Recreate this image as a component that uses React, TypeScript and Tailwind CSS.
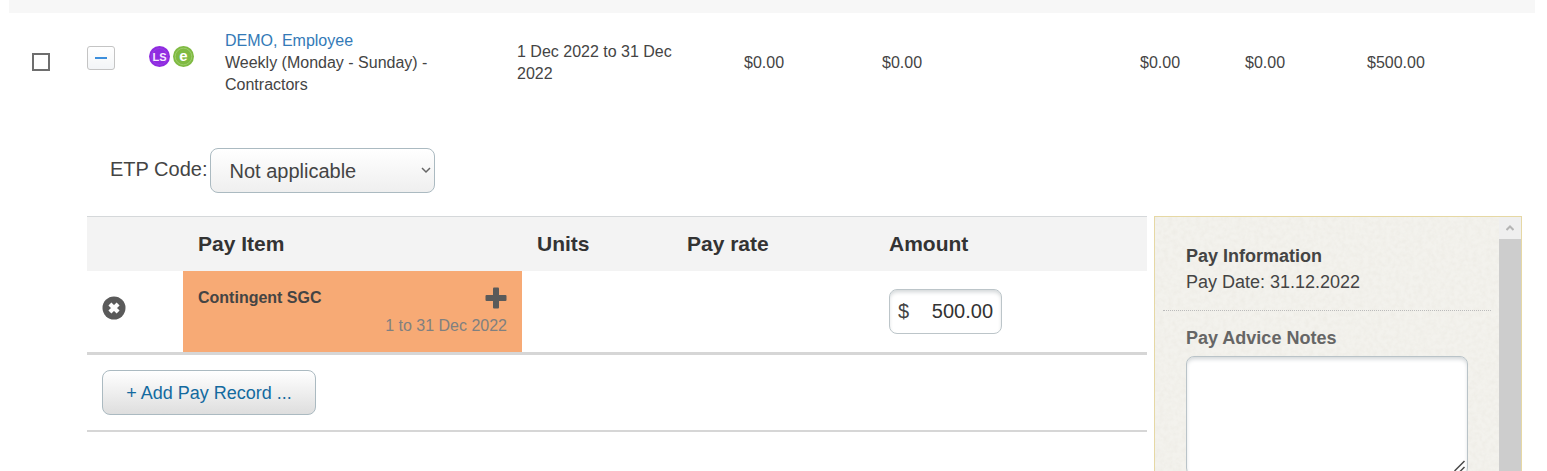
import { useState } from 'react';
import type { ReactNode } from 'react';

type PayRecord = {
  id: number;
  item: string;
  period: string;
  amount: string;
};

const records: PayRecord[] = [
  { id: 1, item: 'Contingent SGC', period: '1 to 31 Dec 2022', amount: '500.00' },
];

const etpCodes = ['Not applicable', 'Code R', 'Code O', 'Code S', 'Code P'];

function SuperBadge() {
  return (
    <svg className="w-5.25 h-5.25" viewBox="0 0 21 21" role="img" aria-label="LS">
      <circle cx="10.5" cy="10.5" r="10.5" fill="#8f2be0" />
      <circle cx="10.5" cy="10.5" r="8" fill="none" stroke="#9a3ee6" strokeWidth="1" />
      <text x="10.5" y="14.5" fill="#f6e9ff" fontSize="11" fontWeight="700" textAnchor="middle">
        LS
      </text>
    </svg>
  );
}

function EmployeeBadge() {
  return (
    <svg className="w-5.25 h-5.25" viewBox="0 0 21 21" role="img" aria-label="e">
      <circle cx="10.5" cy="10.5" r="10.5" fill="#7fba42" />
      <circle cx="10.5" cy="10.5" r="8.3" fill="none" stroke="#a3d075" strokeWidth="0.8" />
      <text x="10.5" y="14.5" fill="#fff" fontSize="15" fontWeight="700" textAnchor="middle">
        e
      </text>
    </svg>
  );
}

function RemoveIcon() {
  return (
    <svg className="w-6 h-6" viewBox="0 0 24 24">
      <circle cx="12" cy="12" r="11.5" fill="#5a5a5a" />
      <path d="M7.9 7.9l8.2 8.2M16.1 7.9l-8.2 8.2" stroke="#fff" strokeWidth="4.2" />
    </svg>
  );
}

function PlusIcon() {
  return (
    <svg className="w-5.5 h-5.5" viewBox="0 0 22 22" fill="#5a5a5a">
      <rect x="8" y="0.5" width="6" height="21" rx="1" />
      <rect x="0.5" y="8" width="21" height="6" rx="1" />
    </svg>
  );
}

function PaperTexture() {
  return (
    <svg className="absolute inset-0 w-full h-full pointer-events-none" aria-hidden="true">
      <filter id="paper">
        <feTurbulence type="fractalNoise" baseFrequency="0.22" numOctaves="2" seed="4" />
        <feColorMatrix values="0 0 0 0 0.8  0 0 0 0 0.78  0 0 0 0 0.72  1.8 0 0 0 -0.6" />
      </filter>
      <rect width="100%" height="100%" filter="url(#paper)" opacity="0.4" />
    </svg>
  );
}

function ScrollTrack() {
  return (
    <div className="flex flex-col w-5.5 shrink-0 relative">
      <div className="h-5.5 bg-[#efefef] flex items-center justify-center">
        <svg className="w-2 h-2" viewBox="0 0 8 8" fill="none" stroke="#b5b5b5" strokeWidth="2">
          <path d="M0.5 6L4 2.5L7.5 6" />
        </svg>
      </div>
      <div className="flex-1 bg-[#cdcdcd]" />
    </div>
  );
}

function HeadCell({ children }: { children?: ReactNode }) {
  return <th className="px-[15px] text-left text-[21px] leading-6 font-bold text-[#333]">{children}</th>;
}

function EmployeeRow({ open, onToggle }: { open: boolean; onToggle: () => void }) {
  return (
    <table className="w-full table-fixed text-left">
      <colgroup>
        <col className="w-[78px]" />
        <col className="w-[62px]" />
        <col className="w-[76px]" />
        <col className="w-[292px]" />
        <col className="w-[227px]" />
        <col className="w-[138px]" />
        <col className="w-[258px]" />
        <col className="w-[105px]" />
        <col className="w-[122px]" />
        <col />
      </colgroup>
      <tbody>
        <tr className="h-24.5 text-[16px] leading-[22px]">
          <td className="pl-[23px]">
            <input
              type="checkbox"
              aria-label="Select DEMO, Employee"
              className="block appearance-none w-4.5 h-4.5 border-2 border-[#6e6e6e] bg-white checked:bg-[#337ab7]"
            />
          </td>
          <td className="pb-2">
            <button
              type="button"
              aria-label="Toggle details"
              aria-expanded={open}
              onClick={onToggle}
              className="flex items-center justify-center w-7 h-6 rounded-[3px] border border-[#c4c4c4] bg-linear-to-b from-white to-[#f3f5f7]"
            >
              <span className="w-3 h-0.5 bg-[#3d8fdc]" />
            </button>
          </td>
          <td className="pb-3">
            <span className="flex gap-[3px]">
              <SuperBadge />
              <EmployeeBadge />
            </span>
          </td>
          <td className="pt-0.5 pr-12">
            <a href="#employee" className="text-[#337ab7]">DEMO, Employee</a>
            <br />
            Weekly (Monday - Sunday) - Contractors
          </td>
          <td className="pt-0.5 pr-12">1 Dec 2022 to 31 Dec 2022</td>
          <td className="pt-0.5">$0.00</td>
          <td className="pt-0.5">$0.00</td>
          <td className="pt-0.5">$0.00</td>
          <td className="pt-0.5">$0.00</td>
          <td className="pt-0.5">$500.00</td>
        </tr>
      </tbody>
    </table>
  );
}

function PayItems() {
  return (
    <div className="flex-1 min-w-0">
      <table className="w-full table-fixed border-collapse">
        <colgroup>
          <col className="w-24" />
          <col className="w-[339px]" />
          <col className="w-[150px]" />
          <col className="w-[202px]" />
          <col />
        </colgroup>
        <thead>
          <tr className="h-[54px] bg-[#f3f3f3] border-t border-[#d5d8da]">
            <HeadCell />
            <HeadCell>Pay Item</HeadCell>
            <HeadCell>Units</HeadCell>
            <HeadCell>Pay rate</HeadCell>
            <HeadCell>Amount</HeadCell>
          </tr>
        </thead>
        <tbody>
          {records.map((r) => (
            <tr key={r.id} className="h-[83px] border-b-3 border-[#d6d6d6]">
              <td className="pl-[15px] pb-1.5">
                <button type="button" aria-label={`Remove ${r.item}`} className="block">
                  <RemoveIcon />
                </button>
              </td>
              <td className="px-[15px] pt-0.5 bg-[#f7aa75] text-[16px] leading-6">
                <div className="flex items-center justify-between">
                  <strong className="font-bold">{r.item}</strong>
                  <button type="button" aria-label="Split record">
                    <PlusIcon />
                  </button>
                </div>
                <div className="mt-1 text-right text-[#808080]">{r.period}</div>
              </td>
              <td />
              <td />
              <td className="px-[15px]">
                <label className="flex items-center w-[113px] h-[45px] px-2 rounded-lg border border-[#bcc5c9] bg-white text-[20px] shadow-[inset_0_3px_4px_-1px_#d0d4d6]">
                  <span>$</span>
                  <input
                    type="text"
                    aria-label="Amount"
                    defaultValue={r.amount}
                    className="w-full min-w-0 text-right text-[#333] bg-transparent outline-none"
                  />
                </label>
              </td>
            </tr>
          ))}
        </tbody>
      </table>
      <div className="pl-[15px] py-[15px] border-b-2 border-[#d6d6d6]">
        <button
          type="button"
          className="block w-[214px] h-[45px] pt-0.5 rounded-lg border border-[#abbac1] bg-linear-to-b from-white to-[#dedede] text-[18px] text-[#136a9f]"
        >
          + Add Pay Record ...
        </button>
      </div>
    </div>
  );
}

function PayInformation() {
  return (
    <aside className="relative flex w-[368px] shrink-0 border border-b-0 border-[#e6d8a4] bg-[#f3f2ed] text-[18px] leading-[26px]">
      <PaperTexture />
      <div className="relative flex-1 px-2">
        <section className="pt-[26px] pb-[15px] px-[23px] border-b border-dotted border-[#bbb]">
          <h2 className="font-bold">Pay Information</h2>
          <p>Pay Date: 31.12.2022</p>
        </section>
        <section className="pt-3.5 px-[23px]">
          <label htmlFor="notes" className="block font-bold text-[#666]">Pay Advice Notes</label>
          <div className="relative mt-[5px]">
            <textarea
              id="notes"
              className="block w-full h-30 p-2 rounded-lg border border-[#b9c3c8] bg-white resize-none shadow-[inset_0_3px_4px_-1px_#d0d4d6]"
            />
            <svg className="absolute right-0.5 bottom-1 w-3 h-3" viewBox="0 0 12 12" stroke="#4a4a4a" strokeWidth="1.5">
              <path d="M0.5 11L10.5 1M6 11.5L10.5 7" />
            </svg>
          </div>
        </section>
      </div>
      <ScrollTrack />
    </aside>
  );
}

export default function App() {
  const [open, setOpen] = useState(true);

  return (
    <main className="flex flex-col h-screen overflow-hidden bg-white text-[#444] font-['Liberation_Sans',Arial,sans-serif]">
      <div className="pl-[9px] pr-3">
        <div className="h-[13px] bg-[#f7f7f7]" />
        <EmployeeRow open={open} onToggle={() => setOpen((v) => !v)} />
      </div>

      {open && (
        <div className="flex flex-col flex-1 pl-[87px] pr-[25px] pt-[37px]">
          <div className="flex items-center gap-[3px] pl-[23px] pb-[23px] text-[20px]">
            <label htmlFor="etp" className="pb-1">ETP Code:</label>
            <div className="relative">
              <select
                id="etp"
                className="block appearance-none w-[225px] h-[45px] pl-[18px] pr-6 rounded-lg border border-[#abbac1] bg-linear-to-b from-white to-[#efefef]"
              >
                {etpCodes.map((code) => (
                  <option key={code}>{code}</option>
                ))}
              </select>
              <svg
                className="absolute right-1 top-[18px] w-[10px] h-2 pointer-events-none"
                viewBox="0 0 10 8"
                fill="none"
                stroke="#666"
                strokeWidth="1.5"
              >
                <path d="M1 2L5 6L9 2" />
              </svg>
            </div>
          </div>

          <div className="flex flex-1 gap-[7px]">
            <PayItems />
            <PayInformation />
          </div>
        </div>
      )}
    </main>
  );
}
